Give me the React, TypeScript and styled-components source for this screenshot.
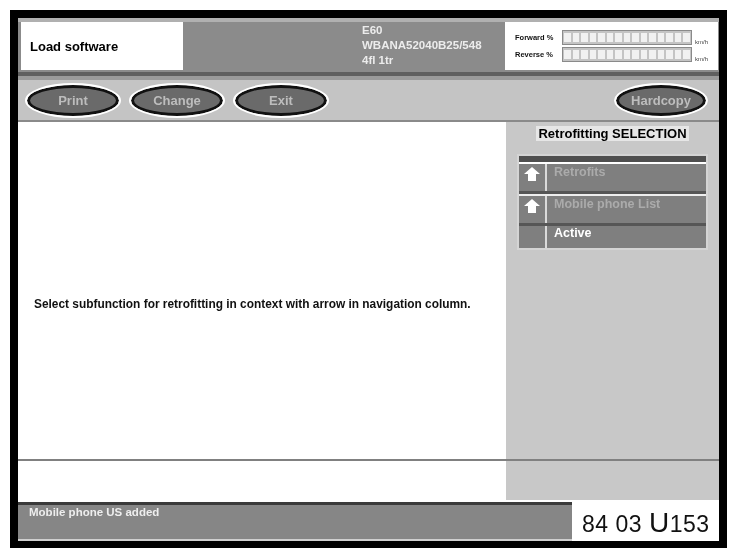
import React from "react";
import styled, { createGlobalStyle } from "styled-components";

const GlobalStyle = createGlobalStyle`
  html, body { margin: 0; padding: 0; background: #fff; }
  body { font-family: "Liberation Sans", Arial, sans-serif; }
`;

const Page = styled.div`
  width: 737px;
  height: 553px;
  box-sizing: border-box;
  padding: 10px 10px 5px 10px;
  background: #fff;
  overflow: hidden;
`;

const Frame = styled.div`
  height: 100%;
  box-sizing: border-box;
  border: 8px solid #000;
  border-bottom-width: 7px;
  background: #fff;
  display: flex;
  flex-direction: column;
  filter: blur(0.7px);
`;

const Header = styled.header`
  height: 54px;
  box-sizing: border-box;
  flex: none;
  display: flex;
  background: #8b8b8b;
  border-top: 4px solid #b0b0b0;
  padding: 0 1px 2px 3px;
`;

const TitleBox = styled.div`
  width: 162px;
  background: #fff;
  display: flex;
  align-items: center;
  padding-left: 9px;
  box-sizing: border-box;
  font-size: 13px;
  font-weight: bold;
  color: #000;
`;

const VehicleInfo = styled.div`
  margin-left: 179px;
  width: 143px;
  padding-top: 1px;
  font-size: 11.5px;
  font-weight: bold;
  line-height: 15px;
  color: #ececec;
  white-space: nowrap;
`;

const Meters = styled.div`
  flex: 1;
  background: #fff;
  display: flex;
  flex-direction: column;
  justify-content: center;
  gap: 2px;
  padding-left: 10px;
`;

const MeterRow = styled.div`
  display: flex;
  align-items: center;
  height: 15px;
`;

const MeterLabel = styled.span`
  width: 47px;
  font-size: 7.5px;
  font-weight: bold;
  color: #111;
  white-space: nowrap;
`;

const MeterBar = styled.div`
  width: 130px;
  height: 15px;
  box-sizing: border-box;
  border: 1px solid #8a8a8a;
  display: grid;
  grid-template-columns: repeat(15, 1fr);
  gap: 2px;
  padding: 2px 1px;
  background: #c4c4c4;
`;

const MeterCell = styled.div`
  background: #f1f1f1;
`;

const MeterUnit = styled.span`
  margin-left: 3px;
  font-size: 6px;
  color: #444;
  align-self: flex-end;
  white-space: nowrap;
`;

const Stripe = styled.div`
  height: 8px;
  box-sizing: border-box;
  flex: none;
  background: #9a9a9a;
  border-top: 4px solid #5f5f5f;
`;

const Toolbar = styled.nav`
  height: 42px;
  box-sizing: border-box;
  flex: none;
  display: flex;
  align-items: center;
  gap: 12px;
  padding: 0 13px 0 9px;
  background: #c4c4c4;
  border-bottom: 2px solid #8a8a8a;
`;

const OvalButton = styled.button<{ $push?: boolean }>`
  width: ${(p) => (p.$push ? 90 : 92)}px;
  height: 31px;
  padding: 0;
  box-sizing: border-box;
  border-radius: 50%;
  border: 3px solid #111;
  outline: 2px solid #fff;
  background: #6a6a6a;
  color: #bdbdbd;
  font: bold 13px "Liberation Sans", Arial, sans-serif;
  margin-left: ${(p) => (p.$push ? "auto" : "0")};
`;

const Main = styled.main`
  flex: 1;
  min-height: 0;
  display: flex;
  padding-bottom: 2px;
`;

const Content = styled.section`
  flex: 1;
  display: flex;
  flex-direction: column;
  background: #fff;
`;

const MessageArea = styled.div`
  flex: 1;
  display: flex;
  align-items: center;
  padding: 26px 0 0 16px;
`;

const Message = styled.p`
  margin: 0;
  font-size: 11.9px;
  font-weight: bold;
  color: #111;
  white-space: nowrap;
`;

const Slot = styled.div`
  height: 39px;
  flex: none;
  border-top: 2px solid #808080;
`;

const Sidebar = styled.aside`
  width: 213px;
  flex: none;
  display: flex;
  flex-direction: column;
  background: #c8c8c8;
`;

const SidebarBody = styled.div`
  flex: 1;
  padding: 4px 11px 0 11px;
`;

const SidebarTitle = styled.h2`
  width: fit-content;
  margin: 0 auto 13px;
  padding: 0 2px;
  background: #e6e6e6;
  font-size: 13px;
  line-height: 15px;
  font-weight: bold;
  color: #000;
`;

const SelectionList = styled.div`
  background: #808080;
  border: 2px solid #d4d4d4;
  display: flex;
  flex-direction: column;
`;

const ListHead = styled.div`
  height: 8px;
  box-sizing: border-box;
  background: #4f4f4f;
  border-bottom: 2px solid #fff;
`;

const ListRow = styled.div<{ $last?: boolean }>`
  display: flex;
  height: ${(p) => (p.$last ? 22 : 30)}px;
  box-sizing: border-box;
  background: #7f7f7f;
  border-bottom: ${(p) => (p.$last ? "0" : "3px solid #565656")};
`;

const Lift = styled.div`
  height: 2px;
  background: #eee;
`;

const IconCell = styled.div`
  width: 28px;
  flex: none;
  display: flex;
  justify-content: center;
  padding-top: 2px;
  box-sizing: border-box;
  border-right: 2px solid #dadada;
`;

const RowLabel = styled.span<{ $active?: boolean }>`
  padding: ${(p) => (p.$active ? "0 0 0 7px" : "1px 0 0 7px")};
  font-size: 12.5px;
  font-weight: bold;
  color: ${(p) => (p.$active ? "#fff" : "#ababab")};
`;

const Footer = styled.footer`
  height: 39px;
  flex: none;
  display: flex;
`;

const StatusBar = styled.div`
  flex: 1;
  background: #868686;
  border-top: 3px solid #3a3a3a;
  border-bottom: 2px solid #cfcfcf;
  padding: 1px 0 0 11px;
  font-size: 11.5px;
  font-weight: bold;
  color: #eee;
  white-space: nowrap;
`;

const CodeBox = styled.div`
  width: 147px;
  flex: none;
  box-sizing: border-box;
  padding: 5px 0 0 10px;
  background: #fff;
  font-size: 23px;
  letter-spacing: 0.5px;
  color: #111;
  white-space: nowrap;
`;

const BigLetter = styled.span`
  font-size: 28px;
`;

const ArrowIcon = () => (
  <svg width="18" height="18" viewBox="0 0 18 18">
    <path d="M9 1 L17 8 L13 8 L13 15 L5 15 L5 8 L1 8 Z" fill="#fff" />
  </svg>
);

const Meter = ({ label }: { label: string }) => (
  <MeterRow>
    <MeterLabel>{label}</MeterLabel>
    <MeterBar>
      {Array.from({ length: 15 }, (_, i) => (
        <MeterCell key={i} />
      ))}
    </MeterBar>
    <MeterUnit>km/h</MeterUnit>
  </MeterRow>
);

export default function App() {
  return (
    <Page>
      <GlobalStyle />
      <Frame>
        <Header>
          <TitleBox>Load software</TitleBox>
          <VehicleInfo>
            E60
            <br />
            WBANA52040B25/548
            <br />
            4fl 1tr
          </VehicleInfo>
          <Meters>
            <Meter label="Forward %" />
            <Meter label="Reverse %" />
          </Meters>
        </Header>
        <Stripe />
        <Toolbar>
          <OvalButton>Print</OvalButton>
          <OvalButton>Change</OvalButton>
          <OvalButton>Exit</OvalButton>
          <OvalButton $push>Hardcopy</OvalButton>
        </Toolbar>
        <Main>
          <Content>
            <MessageArea>
              <Message>
                Select subfunction for retrofitting in context with arrow in navigation column.
              </Message>
            </MessageArea>
            <Slot />
          </Content>
          <Sidebar>
            <SidebarBody>
              <SidebarTitle>Retrofitting SELECTION</SidebarTitle>
              <SelectionList>
                <ListHead />
                <ListRow>
                  <IconCell>
                    <ArrowIcon />
                  </IconCell>
                  <RowLabel>Retrofits</RowLabel>
                </ListRow>
                <Lift />
                <ListRow>
                  <IconCell>
                    <ArrowIcon />
                  </IconCell>
                  <RowLabel>Mobile phone List</RowLabel>
                </ListRow>
                <ListRow $last>
                  <IconCell />
                  <RowLabel $active>Active</RowLabel>
                </ListRow>
              </SelectionList>
            </SidebarBody>
            <Slot />
          </Sidebar>
        </Main>
        <Footer>
          <StatusBar>Mobile phone US added</StatusBar>
          <CodeBox>
            84 03 <BigLetter>U</BigLetter>153
          </CodeBox>
        </Footer>
      </Frame>
    </Page>
  );
}
